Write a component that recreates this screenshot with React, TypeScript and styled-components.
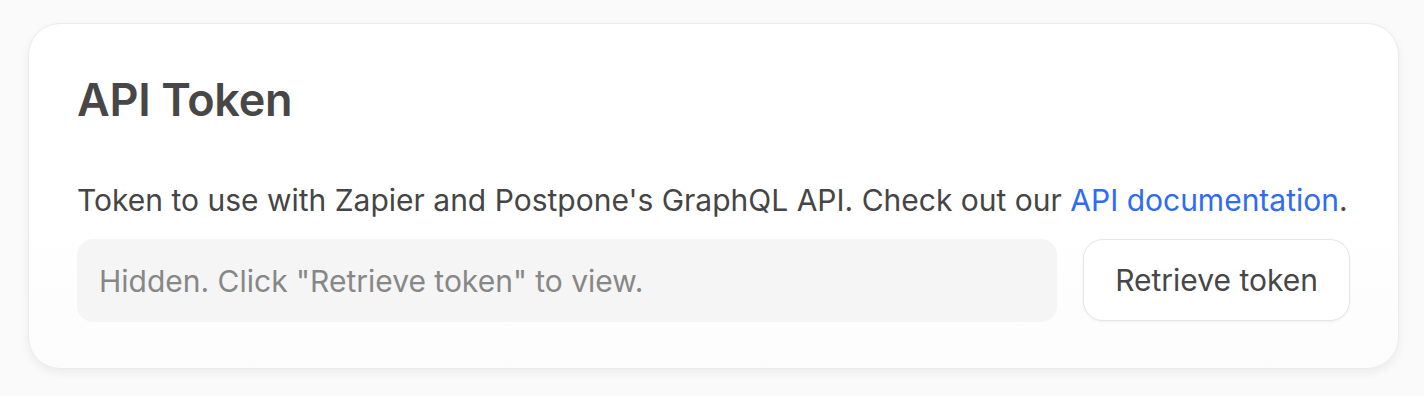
import React from 'react';
import styled, { createGlobalStyle } from 'styled-components';

const GlobalStyle = createGlobalStyle`
  html, body {
    margin: 0;
    padding: 0;
    background: #fafafa;
    font-family: Inter, "Noto Sans", sans-serif;
  }
`;

const Page = styled.div`
  padding: 23px 25px 28px 28px;
`;

const Card = styled.section`
  background: linear-gradient(to bottom, #ffffff 0%, #ffffff 55%, #fcfcfc 100%);
  border: 1.5px solid #ebebeb;
  border-radius: 32px;
  box-shadow: 0 4px 10px rgba(0, 0, 0, 0.06);
  padding: 48px 48px 46px 48px;
`;

const Title = styled.h2`
  margin: 0;
  font-size: 45px;
  line-height: 56px;
  font-weight: 600;
  color: #474747;
  letter-spacing: -0.3px;
`;

const Description = styled.p`
  margin: 52px 0 0;
  font-size: 30px;
  line-height: 40px;
  color: #454545;
`;

const Link = styled.a`
  color: #2f6bf5;
  text-decoration: none;
`;

const Row = styled.div`
  display: flex;
  gap: 26px;
  margin-top: 19px;
`;

const TokenField = styled.input`
  flex: 1;
  min-width: 0;
  height: 83px;
  box-sizing: border-box;
  border: none;
  border-radius: 16px;
  background: #f5f5f5;
  padding: 0 22px;
  font-family: inherit;
  font-size: 30px;
  color: #444;
  outline: none;

  &::placeholder {
    color: #878787;
  }
`;

const Button = styled.button`
  height: 82px;
  padding: 0 31px;
  border: 1.5px solid #e6e6e6;
  border-radius: 20px;
  background: #ffffff;
  box-shadow: 0 1px 3px rgba(0, 0, 0, 0.05);
  font-family: inherit;
  font-size: 30px;
  color: #474747;
  cursor: pointer;
`;

export default function App() {
  return (
    <>
      <GlobalStyle />
      <Page>
        <Card>
          <Title>API Token</Title>
          <Description>
            Token to use with Zapier and Postpone's GraphQL API. Check out our{' '}
            <Link href="#">API documentation</Link>.
          </Description>
          <Row>
            <TokenField readOnly placeholder={'Hidden. Click "Retrieve token" to view.'} />
            <Button>Retrieve token</Button>
          </Row>
        </Card>
      </Page>
    </>
  );
}
